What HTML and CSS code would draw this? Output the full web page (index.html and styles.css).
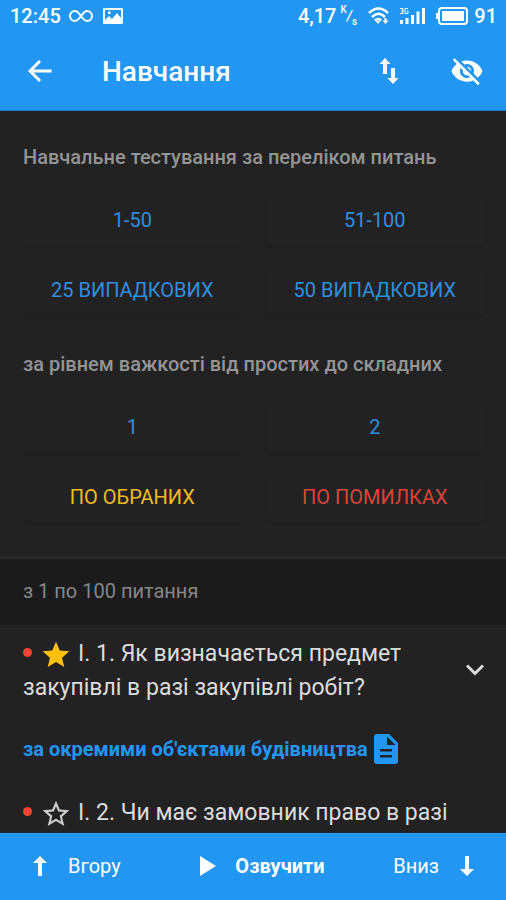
FILE: index.html
```html
<!DOCTYPE html>
<html lang="uk">
<head>
    <meta charset="UTF-8" />
    <meta name="viewport" content="width=device-width, initial-scale=1.0"/>
    <title>Навчання</title>
    <link rel="stylesheet" href="styles.css">
</head>
<body>
<header class="top">
    <div class="status">
        <span>12:45</span>
        <svg class="loop" width="24" height="14" viewBox="0 0 24 14" fill="none" stroke="currentColor" stroke-width="2"><path d="M12 7C9.500 3.500 8.500 2 6 2a5 5 0 0 0 0 10c2.500 0 3.500-1.500 6-5s3.500-5 6-5a5 5 0 0 1 0 10c-2.500 0-3.500-1.500-6-5z"/></svg>
        <svg width="20" height="16" viewBox="0 0 20 16"><path fill="currentColor" fill-rule="evenodd" d="M1 0h18q1 0 1 1v14q0 1-1 1H1q-1 0-1-1V1q0-1 1-1zm1 2v10l4-4 3 3 5-6 4 5V2zm3 1.500h2.500V6H5z"/></svg>
        <span class="speed">4,17<sup>K</sup><i>/</i><sub>s</sub></span>
        <svg class="wifi" width="22" height="18" viewBox="0 0 22 18" fill="none" stroke="currentColor" stroke-width="2.500"><path d="M1 6q9.500-9 19 0M4 10q6.500-6.500 13 0M7 13.500q3.500-3 6 0"/><path d="M7.500 14h5L10 17zM14.500 13.500h6L17.500 17z" fill="currentColor" stroke="none"/><path d="M17.500 11v3" stroke-width="2"/></svg>
        <svg class="signal" width="27" height="18" viewBox="0 0 27 18" fill="currentColor"><path d="M1 13h3v4H1zM6.500 11h3v6h-3zM12 8h3v9h-3zM17.500 4.500h3V17h-3zM23 1h3v16h-3z"/><path d="M1 1.500h3v5H1M2 4h2M9 1.500H6v5h3V4H8" fill="none" stroke="currentColor"/></svg>
        <svg class="battery" width="32" height="18" viewBox="0 0 32 18"><rect x="3" y="1" width="28" height="16" rx="3" fill="none" stroke="currentColor" stroke-width="2"/><path d="M0 6h3v6H0zM6 4h22v10H6z" fill="currentColor"/></svg>
        <span>91</span>
    </div>
    <div class="bar">
        <button class="icon" aria-label="Назад"><svg width="24" height="24" viewBox="0 0 24 24" fill="none" stroke="currentColor" stroke-width="3"><path d="M23.500 12H2.500M12 2L2 12l10 10"/></svg></button>
        <h1>Навчання</h1>
        <button class="icon" aria-label="Сортувати"><svg width="20" height="26" viewBox="0 0 20 26" fill="currentColor"><path d="M6 0l5.500 6H8v10H4V6H.500zM14 26l-5.500-6H12V10h4v10h3.500z"/></svg></button>
        <button class="icon" aria-label="Сховати відповіді"><svg width="34" height="34" viewBox="0 0 24 24" fill="currentColor"><path d="M12 7c2.760 0 5 2.240 5 5 0 .650-.130 1.260-.360 1.830l2.920 2.920c1.510-1.260 2.700-2.890 3.430-4.750-1.730-4.390-6-7.500-11-7.500-1.400 0-2.740.250-3.980.700l2.160 2.160C10.740 7.130 11.350 7 12 7zM2 4.270l2.280 2.280.460.460C3.080 8.300 1.780 10.020 1 12c1.730 4.390 6 7.500 11 7.500 1.550 0 3.030-.300 4.380-.840l.420.420L19.730 22 21 20.730 3.270 3 2 4.270zM7.530 9.800l1.550 1.550c-.050.210-.080.430-.080.650 0 1.660 1.340 3 3 3 .220 0 .440-.030.650-.080l1.550 1.550c-.670.330-1.410.530-2.200.530-2.760 0-5-2.240-5-5 0-.790.200-1.530.530-2.200zm4.310-.780l3.150 3.150.020-.160c0-1.660-1.340-3-3-3l-.170.010z"/></svg></button>
    </div>
</header>

<main>
    <section class="modes">
        <h2>Навчальне тестування за переліком питань</h2>
        <div class="grid">
            <button>1-50</button>
            <button>51-100</button>
            <button>25 ВИПАДКОВИХ</button>
            <button>50 ВИПАДКОВИХ</button>
        </div>
        <h2>за рівнем важкості від простих до складних</h2>
        <div class="grid">
            <button>1</button>
            <button>2</button>
            <button class="chosen">ПО ОБРАНИХ</button>
            <button class="mistakes">ПО ПОМИЛКАХ</button>
        </div>
    </section>

    <div class="range">з 1 по 100 питання</div>

    <section class="questions">
        <div class="question">
            <p><span class="dot"></span><svg class="star full" viewBox="0 0 24 24"><path d="M12 17.270L18.180 21l-1.640-7.030L22 9.240l-7.190-.610L12 2 9.190 8.630 2 9.240l5.460 4.730L5.820 21z"/></svg>I. 1. Як визначається предмет закупівлі в разі закупівлі робіт?</p>
            <button class="toggle" aria-label="Розгорнути"><svg width="18" height="12" viewBox="0 0 18 12" fill="none" stroke="currentColor" stroke-width="3"><path d="M1 1.500l8 8 8-8"/></svg></button>
        </div>
        <a class="answer" href="#">за окремими об'єктами будівництва
            <svg width="24" height="30" viewBox="0 0 24 30"><path fill="currentColor" fill-rule="evenodd" d="M3 0h12l9 9v18q0 3-3 3H3q-3 0-3-3V3q0-3 3-3zm10 2.500V11h8.500zM6 15v2.500h12V15zm0 6v2.500h12V21z"/></svg>
        </a>
        <div class="question">
            <p><span class="dot"></span><svg class="star" viewBox="0 0 24 24"><path d="M22 9.240l-7.190-.620L12 2 9.190 8.630 2 9.240l5.460 4.730L5.820 21 12 17.270 18.180 21l-1.630-7.030L22 9.240zM12 15.400l-3.760 2.270 1-4.280-3.320-2.880 4.380-.380L12 6.100l1.710 4.040 4.380.380-3.320 2.880 1 4.280L12 15.400z"/></svg>I. 2. Чи має замовник право в разі</p>
        </div>
    </section>
</main>

<footer class="bottom">
    <button><svg width="14" height="20" viewBox="0 0 14 20" fill="currentColor"><path d="M7 0l7 7H9v13H5V7H0z"/></svg>Вгору</button>
    <button class="speak"><svg width="16" height="20" viewBox="0 0 16 20" fill="currentColor"><path d="M0 0l16 10L0 20z"/></svg>Озвучити</button>
    <button>Вниз<svg width="14" height="20" viewBox="0 0 14 20" fill="currentColor"><path d="M7 20l7-7H9V0H5v13H0z"/></svg></button>
</footer>
</body>
</html>
```

FILE: styles.css
```css
* {
  box-sizing: border-box;
}

body {
  margin: 0;
  height: 100vh;
  display: flex;
  flex-direction: column;
  background-color: #222;
  color: #ddd;
  font-family: Roboto, sans-serif;
}

h1, h2, p {
  margin: 0;
}

button {
  padding: 0;
  border: none;
  background: none;
  color: inherit;
  font-family: inherit;
  cursor: pointer;
}

.top, .bottom {
  flex-shrink: 0;
  background-color: #2196f3;
  color: #fff;
}

.top {
  border-bottom: 1px solid #1b79c4;
}

.status {
  height: 32px;
  padding: 0 9px 0 10px;
  display: flex;
  align-items: center;
  font-size: 20px;
  font-weight: 500;
}

.loop {
  margin: 0 10px 0 8px;
}

.speed {
  display: flex;
  margin-left: auto;
}

.speed sup, .speed sub, .speed i {
  font-size: 10px;
  line-height: 12px;
}

.speed sup {
  margin-left: 4px;
}

.speed i {
  font-size: 14px;
  line-height: 24px;
}

.speed sub {
  align-self: flex-end;
}

.wifi {
  margin-left: 11px;
}

.signal {
  margin-left: 9px;
}

.battery {
  margin: 0 6px 0 10px;
}

.bar {
  height: 78px;
  padding: 0 22px 0 23px;
  display: flex;
  align-items: center;
}

.icon {
  width: 34px;
  height: 34px;
  display: flex;
  align-items: center;
  justify-content: center;
}

.icon + .icon {
  margin-left: 44px;
}

h1 {
  flex: 1;
  margin-left: 45px;
  font-size: 28px;
  font-weight: 500;
}

main {
  flex: 1;
  min-height: 0;
  overflow: hidden;
}

.modes {
  padding: 34px 22px 35px 23px;
  border-bottom: 2px solid #292929;
}

h2 {
  margin-bottom: 26px;
  color: #949494;
  font-size: 20px;
  line-height: 24px;
  font-weight: 500;
}

.grid {
  display: grid;
  grid-template-columns: 1fr 1fr;
  gap: 20px 24px;
}

.grid + h2 {
  margin-top: 37px;
}

.grid button {
  height: 50px;
  border-radius: 3px;
  box-shadow: 0 1px 3px rgba(0, 0, 0, 0.15);
  color: #338fdd;
  font-size: 20px;
}

.grid .chosen {
  color: #f2bb1d;
}

.grid .mistakes {
  color: #d9453b;
}

.range {
  padding: 0 23px 2px;
  background-color: #1b1b1b;
  color: #868686;
  font-size: 20px;
  line-height: 64px;
}

.questions {
  padding: 12px 22px 0 23px;
}

.question {
  display: flex;
  align-items: center;
  font-size: 23px;
  line-height: 34px;
}

.question p {
  flex: 1;
}

.dot {
  display: inline-block;
  width: 9px;
  height: 9px;
  margin-right: 10px;
  border-radius: 50%;
  background-color: #f44336;
  vertical-align: 4px;
}

.star {
  width: 32px;
  height: 32px;
  margin: -4px 6px -4px -2px;
  fill: #ccc;
  vertical-align: -6px;
}

.full {
  fill: #ffc107;
}

.toggle {
  width: 18px;
  margin-left: 60px;
}

.answer {
  display: flex;
  align-items: center;
  gap: 6px;
  margin: 27px 0 30px;
  color: #2196f3;
  font-size: 20px;
  line-height: 34px;
  font-weight: 700;
  text-decoration: none;
}

.bottom {
  height: 67px;
  padding: 0 32px 2px 33px;
  display: grid;
  grid-template-columns: 1fr auto 1fr;
  align-items: center;
}

.bottom button {
  display: flex;
  align-items: center;
  justify-self: start;
  gap: 21px;
  font-size: 20px;
}

.bottom button:last-child {
  justify-self: end;
}

.bottom .speak {
  gap: 19px;
  padding-left: 18px;
  font-weight: 700;
}
```
